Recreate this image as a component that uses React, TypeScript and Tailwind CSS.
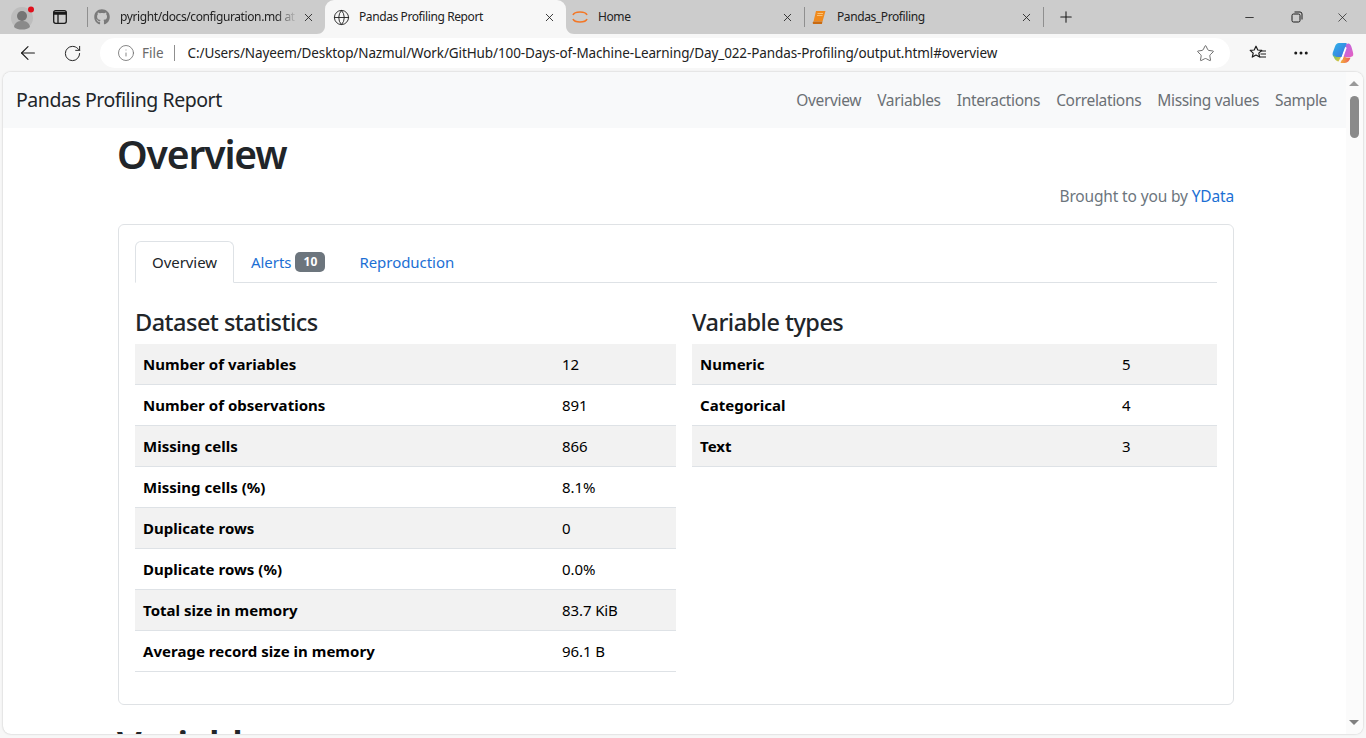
import React from "react";
import { ArrowLeft, RotateCw, Info, Star, MoreHorizontal, Globe, X, Plus, Minus } from "lucide-react";
import { FaGithub } from "react-icons/fa";

const font = "font-['Noto_Sans','Open_Sans',sans-serif]";

function Avatar() {
  return (
    <svg width="26" height="26" viewBox="0 0 26 26">
      <circle cx="12" cy="14" r="11" fill="#bdbdbd" />
      <circle cx="12" cy="12" r="5" fill="#757575" />
      <path d="M4 23c1-5 4-6 8-6s7 1 8 6c-2 2-5 2.500-8 2.500S6 25 4 23z" fill="#8a8a8a" />
      <circle cx="21" cy="5.500" r="3" fill="#e0101c" />
    </svg>
  );
}

function SidebarIcon() {
  return (
    <svg width="16" height="16" viewBox="0 0 16 16" fill="none" stroke="#1a1a1a" strokeWidth="1.300">
      <rect x="1.700" y="1.700" width="12.600" height="12.600" rx="2" />
      <path d="M1.500 3.500h13M1.500 5h13" />
      <path d="M6 5v9" />
    </svg>
  );
}

function JupyterIcon() {
  return (
    <svg width="18" height="18" viewBox="0 0 18 18" fill="none" stroke="#f37726" strokeWidth="1.600">
      <path d="M2 7c1.500-4 12.500-4 14 0" />
      <path d="M2 11c1.500 4 12.500 4 14 0" />
    </svg>
  );
}

function BookIcon() {
  return (
    <svg width="14" height="15" viewBox="0 0 14 15">
      <path d="M4 1h9.500L10.500 11.500H1.500z" fill="#f08a1d" />
      <path d="M1.500 11.500h9l-.6 2.500H1.200c-.8-1 -.6-2 .3-2.500z" fill="#c96a10" />
      <path d="M5.500 3.500h5.500M5 5.500h5.500" stroke="#ffd08a" strokeWidth=".8" />
    </svg>
  );
}

function FavoritesIcon() {
  return (
    <svg width="18" height="18" viewBox="0 0 18 18" fill="none" stroke="#1a1a1a" strokeWidth="1.200">
      <path d="M7 2.200 8.800 6l4 .4-3 2.700.9 4L7 11l-3.700 2.100.9-4-3-2.700 4-.4z" strokeLinejoin="round" />
      <path d="M12 7h5M11.500 10h5.500M11 13h6" />
    </svg>
  );
}

function RestoreIcon() {
  return (
    <svg width="12" height="12" viewBox="0 0 12 12" fill="none" stroke="#1a1a1a" strokeWidth="1">
      <rect x="1" y="3" width="8" height="8" rx="1.500" />
      <path d="M3.500 1h5.500a2 2 0 0 1 2 2v5.500" />
    </svg>
  );
}

function CopilotIcon() {
  return (
    <svg width="24" height="24" viewBox="0 0 24 24">
      <defs>
        <linearGradient id="cpA" x1="0" y1="0" x2="1" y2="1">
          <stop offset="0" stopColor="#2fb6e8" />
          <stop offset="1" stopColor="#3a6fe0" />
        </linearGradient>
        <linearGradient id="cpB" x1="0" y1="0" x2="1" y2="1">
          <stop offset="0" stopColor="#b06ae8" />
          <stop offset="1" stopColor="#e85fc0" />
        </linearGradient>
        <linearGradient id="cpC" x1="0" y1="0" x2="1" y2="1">
          <stop offset="0" stopColor="#55c56b" />
          <stop offset="1" stopColor="#f2c33c" />
        </linearGradient>
        <linearGradient id="cpD" x1="0" y1="0" x2="1" y2="0">
          <stop offset="0" stopColor="#f4b13c" />
          <stop offset="1" stopColor="#ec5a5a" />
        </linearGradient>
      </defs>
      <path d="M8 2h6.500c1 0 1.600.7 1.300 1.600L11 16H4.500C2 16 1 14 1.800 11.500L4 5.500C4.800 3.300 6 2 8 2z" fill="url(#cpA)" />
      <path d="M15 4c1-1.500 3-2 4.200-.5 1 1.300 1.300 2.500 2 5 .9 3.300 1.800 5.500.3 6.800-1.300 1-4 1-7 1L12 16z" fill="url(#cpB)" />
      <path d="M2 13c1 2.500 3 3 6 3h2l-2.500 4.500C5 20 3 18 2 13z" fill="url(#cpC)" />
      <path d="M9.500 21.500 13 15c1 1.500 3 2 6.500 1.800-1 3-3 5.200-5.500 5.200H10.500c-.7 0-1.200-.2-1-.5z" fill="url(#cpD)" />
      <path d="M14.700 7 10.800 18" stroke="#ffffff" strokeWidth="1.800" strokeLinecap="round" />
    </svg>
  );
}

function Tab({ icon, title, active, fade, width, pad, gap }: { icon: React.ReactNode; title: string; active?: boolean; fade?: boolean; width: string; pad: string; gap: string }) {
  return (
    <div className={`${width} ${pad} relative h-[34px] shrink-0 flex items-center pr-[10px] ${active ? "bg-[#f7f7f7] rounded-t-[9px]" : ""}`}>
      {active && (
        <>
          <svg className="absolute bottom-0 left-[-8px]" width="8" height="8" viewBox="0 0 8 8">
            <path d="M8 0v8H0c4.500 0 8-3.500 8-8z" fill="#f7f7f7" />
          </svg>
          <svg className="absolute bottom-0 right-[-8px]" width="8" height="8" viewBox="0 0 8 8">
            <path d="M0 0v8h8C3.500 8 0 4.500 0 0z" fill="#f7f7f7" />
          </svg>
        </>
      )}
      <div className="w-[22px] flex justify-center shrink-0">{icon}</div>
      <div
        className={`${gap} flex-1 min-w-0 overflow-hidden whitespace-nowrap text-[12px] tracking-[-0.4px] text-[#222222] ${
          fade ? "[mask-image:linear-gradient(to_right,black_88%,transparent)] mr-[5px]" : ""
        }`}
      >
        {title}
      </div>
      <X size={13} strokeWidth={1.600} color="#222222" className="shrink-0" />
    </div>
  );
}

const Divider = () => <div className="w-px h-[20px] bg-[#8f8f8f] shrink-0" />;

const stats: [string, string][] = [
  ["Number of variables", "12"],
  ["Number of observations", "891"],
  ["Missing cells", "866"],
  ["Missing cells (%)", "8.1%"],
  ["Duplicate rows", "0"],
  ["Duplicate rows (%)", "0.0%"],
  ["Total size in memory", "83.7 KiB"],
  ["Average record size in memory", "96.1 B"],
];
const types: [string, string][] = [
  ["Numeric", "5"],
  ["Categorical", "4"],
  ["Text", "3"],
];

function StatTable({ rows, labelWidth }: { rows: [string, string][]; labelWidth: string }) {
  return (
    <table className="w-full border-separate border-spacing-0 text-[15px] text-black">
      <tbody>
        {rows.map(([k, v], i) => (
          <tr key={k} className={`h-[41px] ${i % 2 === 0 ? "bg-[#f2f2f2]" : "bg-white"}`}>
            <th className={`${labelWidth} pl-2 text-left font-bold tracking-[0.02px] border-b border-[#dee2e6]`}>{k}</th>
            <td className="pl-2 text-left tracking-[-0.1px] border-b border-[#dee2e6]">{v}</td>
          </tr>
        ))}
      </tbody>
    </table>
  );
}

export default function App() {
  return (
    <div className={`${font} w-[1366px] h-[738px] overflow-hidden flex flex-col bg-[#f7f7f7]`}>
      {/* tab strip */}
      <div className="h-[34px] bg-[#cccccc] flex items-center shrink-0">
        <div className="w-[46px] pl-[10px] shrink-0 flex items-center"><Avatar /></div>
        <div className="w-[27px] ml-[6px] shrink-0 flex items-center"><SidebarIcon /></div>
        <div className="ml-[8px]"><Divider /></div>
        <Tab width="w-[237px]" pad="pl-[3px]" gap="ml-[7px]" fade title="pyright/docs/configuration.md at" icon={<FaGithub size={16} color="#7a7a7a" />} />
        <Tab width="w-[241px]" pad="pl-[5px]" gap="ml-[7px]" active title="Pandas Profiling Report" icon={<Globe size={17} strokeWidth={1.300} color="#222222" />} />
        <Tab width="w-[238px]" pad="pl-[3px]" gap="ml-[7px]" title="Home" icon={<JupyterIcon />} />
        <Divider />
        <Tab width="w-[238px]" pad="pl-[3px]" gap="ml-[7px]" title="Pandas_Profiling" icon={<BookIcon />} />
        <Divider />
        <div className="ml-[13px] shrink-0"><Plus size={18} strokeWidth={1.400} color="#1a1a1a" /></div>
        <div className="flex-1" />
        <div className="w-[47px] flex justify-center"><Minus size={13} strokeWidth={1.500} color="#1a1a1a" /></div>
        <div className="w-[47px] flex justify-center"><RestoreIcon /></div>
        <div className="w-[46px] flex justify-center pr-[2px]"><X size={15} strokeWidth={1.100} color="#1a1a1a" /></div>
      </div>

      {/* toolbar */}
      <div className="h-[38px] shrink-0 flex items-center">
        <div className="w-[55px] flex justify-center"><ArrowLeft size={22} strokeWidth={1.200} color="#1a1a1a" /></div>
        <div className="w-[34px] flex justify-center"><RotateCw size={19} strokeWidth={1.200} color="#1a1a1a" /></div>
        <div className="ml-[11px] w-[1130px] h-[30px] rounded-full bg-white flex items-center">
          <Info size={18} strokeWidth={1.100} color="#6e6e6e" className="ml-[17px]" />
          <span className="ml-[7px] text-[13.5px] text-[#6a6a6a]">File</span>
          <div className="ml-[10px] w-px h-[16px] bg-[#8f8f8f]" />
          <span className="ml-[13px] text-[13.5px] tracking-[-0.11px] text-[#222222] whitespace-nowrap">
            C:/Users/Nayeem/Desktop/Nazmul/Work/GitHub/100-Days-of-Machine-Learning/Day_022-Pandas-Profiling/output.html#overview
          </span>
          <div className="flex-1" />
          <Star size={19} strokeWidth={1.100} color="#5a5a5a" className="mr-[15px]" />
        </div>
        <div className="ml-[19px]"><FavoritesIcon /></div>
        <div className="ml-[25px]"><MoreHorizontal size={18} strokeWidth={2} color="#1a1a1a" /></div>
        <div className="ml-[21px]"><CopilotIcon /></div>
      </div>

      {/* page */}
      <div className="mx-[3px] h-[662px] shrink-0 bg-white rounded-[8px] shadow-[0_0_2px_rgba(0,0,0,0.25)] overflow-hidden flex">
        <div className="w-[1343px] shrink-0 overflow-hidden text-[#212529]">
          <nav className="h-[56px] bg-[#f8f9fa] flex items-center justify-between pl-[13px] pr-[19px]">
            <span className="text-[19.5px] tracking-[-0.46px] text-[#212529]">Pandas Profiling Report</span>
            <div className="flex gap-[16px] pt-[2px] text-[15.5px] tracking-[-0.33px] text-[#6b7075]">
              <span>Overview</span>
              <span>Variables</span>
              <span>Interactions</span>
              <span>Correlations</span>
              <span>Missing values</span>
              <span>Sample</span>
            </div>
          </nav>

          <div className="ml-[115px] w-[1116px]">
            <h1 className="-ml-px pt-[2px] text-[39px] leading-[48px] font-semibold tracking-[-1.13px] text-[#212529] h-[52px]">Overview</h1>
            <p className="mt-[4px] h-[24px] leading-[24px] text-right text-[15.5px] tracking-[-0.15px] text-[#6c757d]">
              Brought to you by <span className="text-[#1c6fd4]">YData</span>
            </p>
            <div className="mt-[16px] h-[481px] border border-[#dfe2e5] rounded-[6px] px-[16px] pt-[16px]">
              <div className="h-[42px] flex items-end border-b border-[#dee2e6] text-[15px] tracking-[-0.05px]">
                <div className="w-[99px] h-[42px] -mb-px bg-white border border-[#dee2e6] border-b-white rounded-t-[6px] flex items-center justify-center text-[#212529]">Overview</div>
                <div className="h-[41px] ml-[17px] flex items-center text-[#1c6fd4]">
                  <span className="pt-[2px]">Alerts</span>
                  <span className="ml-[4px] w-[30px] h-[20px] rounded-[5px] bg-[#6c757d] text-white text-[12px] font-bold flex items-center justify-center">10</span>
                </div>
                <div className="h-[41px] ml-[34px] flex items-center text-[#1c6fd4]">
                  <span className="pt-[2px]">Reproduction</span>
                </div>
              </div>
              <div className="mt-[20px] flex gap-[16px]">
                <div className="w-[541px]">
                  <h2 className="h-[41px] text-[23.5px] leading-[38px] font-medium tracking-[-0.52px] text-[#212529]">Dataset statistics</h2>
                  <StatTable rows={stats} labelWidth="w-[419px]" />
                </div>
                <div className="w-[525px]">
                  <h2 className="h-[41px] text-[23.5px] leading-[38px] font-medium tracking-[-0.52px] text-[#212529]">Variable types</h2>
                  <StatTable rows={types} labelWidth="w-[422px]" />
                </div>
              </div>
            </div>
            <h1 className="-ml-px mt-[16px] text-[39px] leading-[48px] font-semibold tracking-[-1.13px] text-[#212529]">Variables</h1>
          </div>
        </div>

        {/* scrollbar */}
        <div className="flex-1 flex flex-col items-center bg-[#fbfbfb] pr-[1px]">
          <div className="mt-[9px] w-0 h-0 border-x-[5px] border-x-transparent border-b-[5px] border-b-[#9a9a9a]" />
          <div className="mt-[10px] w-[9px] h-[42px] rounded-full bg-[#8a8a8a]" />
          <div className="flex-1" />
          <div className="mb-[9px] w-0 h-0 border-x-[5px] border-x-transparent border-t-[5px] border-t-[#808080]" />
        </div>
      </div>
    </div>
  );
}
